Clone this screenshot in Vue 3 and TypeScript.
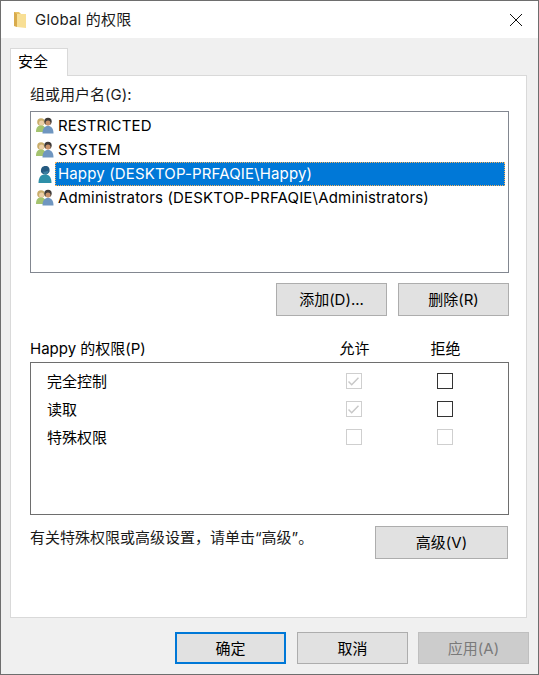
<script setup lang="ts">
const principals = [
  { name: 'RESTRICTED', kind: 'group', selected: false },
  { name: 'SYSTEM', kind: 'group', selected: false },
  { name: 'Happy (DESKTOP-PRFAQIE\\Happy)', kind: 'user', selected: true },
  { name: 'Administrators (DESKTOP-PRFAQIE\\Administrators)', kind: 'group', selected: false },
];

const permissions = [
  { name: '完全控制', allow: 'checked', deny: 'on' },
  { name: '读取', allow: 'checked', deny: 'on' },
  { name: '特殊权限', allow: 'off', deny: 'off' },
];
</script>

<template>
  <div class="window">
    <header class="titlebar">
      <svg class="folder" width="16" height="18" viewBox="0 0 16 18">
        <path d="M1 1h5l2 2h5v13l-12-1z" fill="#e9c468" />
        <path d="M4 3h9v14l-9-1z" fill="#f8df95" />
        <path d="M1 1l3 2v13l-3-1z" fill="#d8ab4c" />
      </svg>
      <span class="title">Global 的权限</span>
      <svg class="close" width="14" height="14" viewBox="0 0 14 14">
        <path d="M1 1l12 12M13 1L1 13" stroke="#111" stroke-width="1" fill="none" />
      </svg>
    </header>

    <main class="content">
      <div class="tabs"><div class="tab">安全</div></div>
      <section class="panel">
        <div class="label">组或用户名(G):</div>
        <ul class="list">
          <li v-for="p in principals" :key="p.name" class="row">
            <svg class="avatar" width="20" height="20" viewBox="0 0 20 20">
              <template v-if="p.kind === 'group'">
                <circle cx="6" cy="6" r="3.800" fill="#c9ad6a" />
                <circle cx="6.500" cy="7" r="2.500" fill="#ecd0a8" />
                <path d="M1 16c0-5 2-6.500 5-6.500s5 1.500 5 6.500z" fill="#a4c36f" />
                <circle cx="13" cy="5.500" r="3.700" fill="#3e3a38" />
                <circle cx="13" cy="7" r="2.500" fill="#c9936b" />
                <path d="M7.500 17.500c0-5 2-7.500 5.500-7.500s5.500 2.500 5.500 7.500z" fill="#6f96c0" />
              </template>
              <template v-else>
                <path d="M6 8c-.5-4 1.500-6 4.500-6 3 0 4.500 2 4 5.500-1 2-2 3-4 3-2.500 0-3.500-1-4.500-2.500z" fill="#245a80" />
                <path d="M8 7.500c2 .5 3.500 0 5.500-1 0 2.500-1 4-3 4-1.500 0-2-1-2.500-3z" fill="#3b7ea0" />
                <path d="M3.500 19c0-6 2.500-8.500 6.500-8.500s6.500 2.500 6.500 8.500z" fill="#2d8fa8" />
              </template>
            </svg>
            <span class="row-text" :class="{ selected: p.selected }">{{ p.name }}</span>
          </li>
        </ul>
        <div class="list-actions">
          <button class="btn">添加(D)...</button>
          <button class="btn">删除(R)</button>
        </div>

        <div class="perm-head">
          <span class="perm-name">Happy 的权限(P)</span>
          <span class="perm-col">允许</span>
          <span class="perm-col">拒绝</span>
        </div>
        <div class="perm-box">
          <div v-for="perm in permissions" :key="perm.name" class="perm-row">
            <span class="perm-name">{{ perm.name }}</span>
            <span class="perm-col">
              <span class="check" :class="perm.allow">
                <svg v-if="perm.allow === 'checked'" width="11" height="9" viewBox="0 0 11 9">
                  <path d="M0.500 4.500l3.200 3.200 6.800-7" stroke="#c8c8c8" stroke-width="1.500" fill="none" />
                </svg>
              </span>
            </span>
            <span class="perm-col"><span class="check" :class="perm.deny"></span></span>
          </div>
        </div>

        <div class="advanced">
          <span>有关特殊权限或高级设置，请单击“高级”。</span>
          <button class="btn btn-wide">高级(V)</button>
        </div>
      </section>

      <footer class="footer">
        <button class="btn btn-foot default">确定</button>
        <button class="btn btn-foot">取消</button>
        <button class="btn btn-foot" disabled>应用(A)</button>
      </footer>
    </main>
  </div>
</template>

<style>
html,
body {
  margin: 0;
  background: #f0f0f0;
}
</style>

<style scoped>
.window {
  box-sizing: border-box;
  width: 539px;
  height: 675px;
  border: 1px solid #6e6e6e;
  display: flex;
  flex-direction: column;
  font-family: Inter, "Noto Sans CJK SC", sans-serif;
  font-size: 15px;
  color: #000;
  overflow: hidden;
}

.titlebar {
  height: 37px;
  flex: none;
  background: #fff;
  display: flex;
  align-items: center;
  padding: 0 15px 0 12px;
}

.folder {
  margin-right: 6px;
}

.title {
  flex: 1;
  color: #1a1a1a;
  line-height: 35px;
  letter-spacing: 0.2px;
}

.content {
  flex: 1;
  background: #f0f0f0;
  padding: 10px 11px 0 9px;
  display: flex;
  flex-direction: column;
}

.tabs {
  display: flex;
  height: 27px;
}

.tab {
  box-sizing: border-box;
  width: 58px;
  height: 28px;
  background: #fff;
  border: 1px solid #d9d9d9;
  border-bottom: 0;
  padding-left: 7px;
  line-height: 26px;
  position: relative;
  z-index: 1;
}

.panel {
  box-sizing: border-box;
  height: 543px;
  background: #fff;
  border: 1px solid #d9d9d9;
  padding: 0 17px 0 19px;
}

.label {
  height: 35px;
  line-height: 37px;
  color: #1a1a1a;
}

.list {
  box-sizing: border-box;
  list-style: none;
  margin: 0;
  height: 162px;
  border: 1px solid #828790;
  padding: 2px 3px 0 4px;
}

.row {
  height: 24px;
  display: flex;
  align-items: center;
}

.avatar {
  flex: none;
}

.row-text {
  padding: 0 2px 0 3px;
  height: 24px;
  line-height: 23px;
  white-space: nowrap;
  letter-spacing: 0.15px;
}

.row-text.selected {
  flex: 1;
  box-sizing: border-box;
  background: #0078d7;
  color: #fff;
  outline: 1px dotted #f7b25c;
  outline-offset: -1px;
}

.list-actions {
  display: flex;
  justify-content: flex-end;
  gap: 11px;
  margin-top: 10px;
}

.btn {
  box-sizing: border-box;
  width: 111px;
  height: 33px;
  padding: 0 0 2px;
  background: #e1e1e1;
  border: 1px solid #adadad;
  font: inherit;
  color: #000;
}

.perm-head {
  display: flex;
  align-items: center;
  height: 20px;
  margin-top: 21px;
  padding-right: 18px;
}

.perm-name {
  flex: 1;
}

.perm-col {
  width: 91px;
  display: flex;
  justify-content: center;
}

.perm-box {
  box-sizing: border-box;
  height: 153px;
  margin-top: 5px;
  border: 1px solid #6e6e6e;
  padding: 4px 18px 0 16px;
}

.perm-row {
  height: 28px;
  display: flex;
  align-items: center;
}

.perm-row .perm-name {
  padding-bottom: 2px;
}

.check {
  box-sizing: border-box;
  width: 16px;
  height: 16px;
  display: flex;
  align-items: center;
  justify-content: center;
  border: 1px solid #cfcfcf;
}

.check.on {
  border-color: #333;
}

.advanced {
  display: flex;
  justify-content: space-between;
  align-items: flex-start;
  margin-top: 11px;
  color: #1a1a1a;
}

.btn-wide {
  width: 133px;
  margin-right: 1px;
}

.footer {
  display: flex;
  justify-content: flex-end;
  gap: 11px;
  margin-top: 14px;
  margin-right: -2px;
}

.btn-foot {
  width: 111px;
  height: 32px;
}

.btn-foot.default {
  border: 2px solid #0078d7;
}

.btn-foot:disabled {
  margin-left: -1px;
  background: #cccccc;
  border-color: #bfbfbf;
  color: #7a7a7a;
}
</style>
